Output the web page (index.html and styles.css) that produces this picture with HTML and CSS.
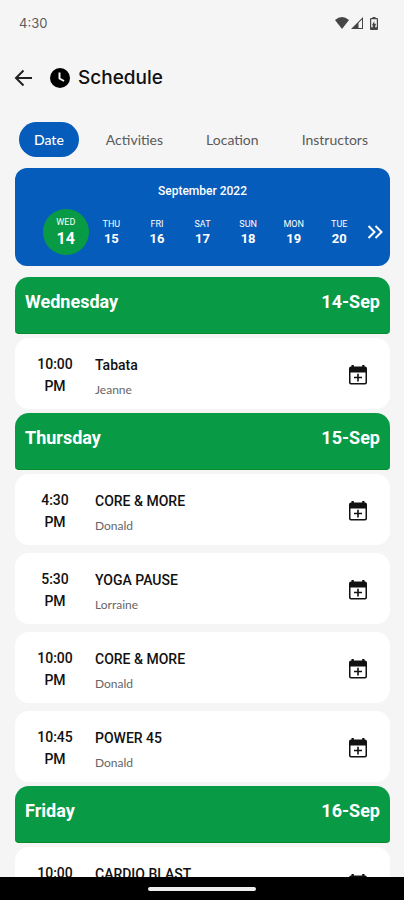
FILE: index.html
```
<!DOCTYPE html>
<html lang="en">
<head>
<meta charset="utf-8">
<meta name="viewport" content="width=device-width, initial-scale=1">
<title>Schedule</title>
<link rel="stylesheet" href="styles.css">
</head>
<body>
<svg class="defs" aria-hidden="true">
  <symbol id="calendar-add" viewBox="0 0 18 20">
    <path fill-rule="evenodd" d="M2.500 0h2.300v1.500h8.400V0h2.300v1.500h.5a2 2 0 0 1 2 2v14a2 2 0 0 1-2 2H2a2 2 0 0 1-2-2v-14a2 2 0 0 1 2-2h.5zM1.500 7.500v9.700q0 .8.800.8h13.400q.8 0 .8-.8V7.500z"/>
    <path d="M8.200 8.700h1.600v3.100H13v1.500H9.800v3.100H8.200v-3.100H5v-1.500h3.200z"/>
  </symbol>
</svg>
<div class="screen">
  <div class="status">
    <span>4:30</span>
    <div class="status-icons">
      <svg width="14" height="12" viewBox="0 0 14 12" aria-hidden="true"><path d="M0 3Q7-3 14 3L7 12z"/></svg>
      <svg width="12" height="12" viewBox="0 0 12 12" aria-hidden="true"><path fill-rule="evenodd" d="M12 0v12H0zM11 2.500 7.500 6v5H11z"/></svg>
      <svg class="battery" width="8" height="13" viewBox="0 0 8 13" aria-hidden="true"><path fill-rule="evenodd" d="M2.500 0h3v1H7q1 0 1 1v10q0 1-1 1H1q-1 0-1-1V2q0-1 1-1h1.500zM1.200 2.300v8h1.500V8H2l2.300-4v2.800H6l-1 3.500h1.800v-8z"/></svg>
    </div>
  </div>
  <header class="header">
    <button class="back" aria-label="Back">
      <svg width="18" height="18" viewBox="0 0 18 18" aria-hidden="true"><path d="M9.500 1.500 2 9l7.500 7.500M2 9h16"/></svg>
    </button>
    <svg width="20" height="20" viewBox="0 0 20 20" aria-hidden="true"><circle cx="10" cy="10" r="10"/><path class="hands" d="M9.500 4.500v6l4.500 2.500"/></svg>
    <h1>Schedule</h1>
  </header>
  <nav class="tabs">
    <button class="tab active">Date</button>
    <button class="tab">Activities</button>
    <button class="tab">Location</button>
    <button class="tab">Instructors</button>
  </nav>
  <main class="content">
    <section class="week">
      <h2>September 2022</h2>
      <div class="days">
        <button class="day selected"><span>WED</span><b>14</b></button>
        <button class="day"><span>THU</span><b>15</b></button>
        <button class="day"><span>FRI</span><b>16</b></button>
        <button class="day"><span>SAT</span><b>17</b></button>
        <button class="day"><span>SUN</span><b>18</b></button>
        <button class="day"><span>MON</span><b>19</b></button>
        <button class="day"><span>TUE</span><b>20</b></button>
        <button class="next" aria-label="Next week">
          <svg width="16" height="14" viewBox="0 0 16 14" aria-hidden="true"><path d="m1.500 1 6 6-6 6M8.500 1l6 6-6 6"/></svg>
        </button>
      </div>
    </section>
    <section class="group">
      <h2 class="group-title"><span>Wednesday</span><span>14-Sep</span></h2>
      <article class="card">
        <time>10:00 PM</time>
        <div class="info"><h3>Tabata</h3><p>Jeanne</p></div>
        <button class="add" aria-label="Add Tabata to calendar"><svg width="18" height="20" aria-hidden="true"><use href="#calendar-add"/></svg></button>
      </article>
    </section>
    <section class="group">
      <h2 class="group-title"><span>Thursday</span><span>15-Sep</span></h2>
      <article class="card">
        <time>4:30 PM</time>
        <div class="info"><h3>CORE &amp; MORE</h3><p>Donald</p></div>
        <button class="add" aria-label="Add Core &amp; More to calendar"><svg width="18" height="20" aria-hidden="true"><use href="#calendar-add"/></svg></button>
      </article>
      <article class="card">
        <time>5:30 PM</time>
        <div class="info"><h3>YOGA PAUSE</h3><p>Lorraine</p></div>
        <button class="add" aria-label="Add Yoga Pause to calendar"><svg width="18" height="20" aria-hidden="true"><use href="#calendar-add"/></svg></button>
      </article>
      <article class="card">
        <time>10:00 PM</time>
        <div class="info"><h3>CORE &amp; MORE</h3><p>Donald</p></div>
        <button class="add" aria-label="Add Core &amp; More to calendar"><svg width="18" height="20" aria-hidden="true"><use href="#calendar-add"/></svg></button>
      </article>
      <article class="card">
        <time>10:45 PM</time>
        <div class="info"><h3>POWER 45</h3><p>Donald</p></div>
        <button class="add" aria-label="Add Power 45 to calendar"><svg width="18" height="20" aria-hidden="true"><use href="#calendar-add"/></svg></button>
      </article>
    </section>
    <section class="group">
      <h2 class="group-title"><span>Friday</span><span>16-Sep</span></h2>
      <article class="card">
        <time>10:00 PM</time>
        <div class="info"><h3>CARDIO BLAST</h3></div>
        <button class="add" aria-label="Add Cardio Blast to calendar"><svg width="18" height="20" aria-hidden="true"><use href="#calendar-add"/></svg></button>
      </article>
    </section>
  </main>
  <footer class="navbar"><div class="handle"></div></footer>
</div>
</body>
</html>
```

FILE: styles.css
```
* { box-sizing: border-box; margin: 0; padding: 0; }
body { background: #f5f5f5; color: #111; font-family: Roboto, sans-serif; }
button { border: 0; background: none; color: inherit; font: inherit; cursor: pointer; }
svg { display: block; flex: none; }
.defs { position: absolute; width: 0; height: 0; }
.screen { display: flex; flex-direction: column; height: 100vh; overflow: hidden; }

.status { display: flex; flex: none; align-items: center; justify-content: space-between; height: 46px; padding: 0 26px 0 19px; color: #5c5c5c; font: 13px/16px Inter, sans-serif; }
.status-icons { display: flex; align-items: center; gap: 2px; fill: #454545; }
.battery { margin-left: 5px; }

.header { display: flex; flex: none; align-items: center; height: 64px; padding: 0 14px; }
.back { margin-right: 18px; }
.back path { fill: none; stroke: #222; stroke-width: 2; }
.hands { fill: none; stroke: #f5f5f5; stroke-width: 2; }
.header h1 { margin-left: 8px; font: 500 19px/24px Inter, sans-serif; }

.tabs { display: flex; flex: none; justify-content: space-between; margin-top: 12px; padding: 0 20px 0 19px; }
.tab { height: 35px; padding: 0 16px 0 13px; border-radius: 18px; color: #5a5a5a; font: 14px/20px Lato, sans-serif; }
.tab.active { padding: 0 15px; background: #065cba; color: #fff; font-weight: 500; }

.content { flex: 1; min-height: 0; overflow: hidden; padding: 11px 14px 0 15px; }
.week { height: 98px; margin-bottom: 11px; padding: 15px 4px 0 28px; border-radius: 12px; background: #065cba; color: #fff; }
.week h2 { padding-right: 24px; text-align: center; font: 500 12px/16px Roboto, sans-serif; }
.days { display: flex; align-items: center; margin-top: 10px; }
.day { display: flex; flex: 1; flex-direction: column; align-items: center; justify-content: center; height: 46px; }
.day span { font-size: 9px; line-height: 13px; }
.day b { font-size: 13px; line-height: 15px; }
.day.selected { border-radius: 50%; background: #089a45; }
.day.selected b { font-size: 16px; line-height: 20px; }
.next { width: 24px; padding-left: 5px; }
.next path { fill: none; stroke: #fff; stroke-width: 2; }

.group { display: flex; flex-direction: column; gap: 8px; margin-bottom: 4px; }
.group-title { display: flex; justify-content: space-between; height: 57px; margin-bottom: -4px; padding: 13px 10px; border-bottom: 1px solid #078c2c; border-radius: 14px 14px 4px 4px; background: #089a45; color: #fff; font: 700 18px/24px Roboto, sans-serif; }
.card { display: flex; align-items: center; height: 71px; padding: 2px 23px 0 16px; border-radius: 14px; background: #fff; }
time { width: 48px; text-align: center; font-size: 14px; font-weight: 500; line-height: 22px; }
.info { flex: 1; height: 50px; padding: 5px 0 0 16px; }
.info h3 { font-size: 14px; font-weight: 500; line-height: 20px; }
.info p { margin-top: 5px; color: #666; font: 12px/20px Lato, sans-serif; }
.add { fill: #111; }

.navbar { display: flex; flex: none; align-items: center; justify-content: center; height: 23px; background: #000; }
.handle { width: 108px; height: 4px; border-radius: 2px; background: #eee; }
```
